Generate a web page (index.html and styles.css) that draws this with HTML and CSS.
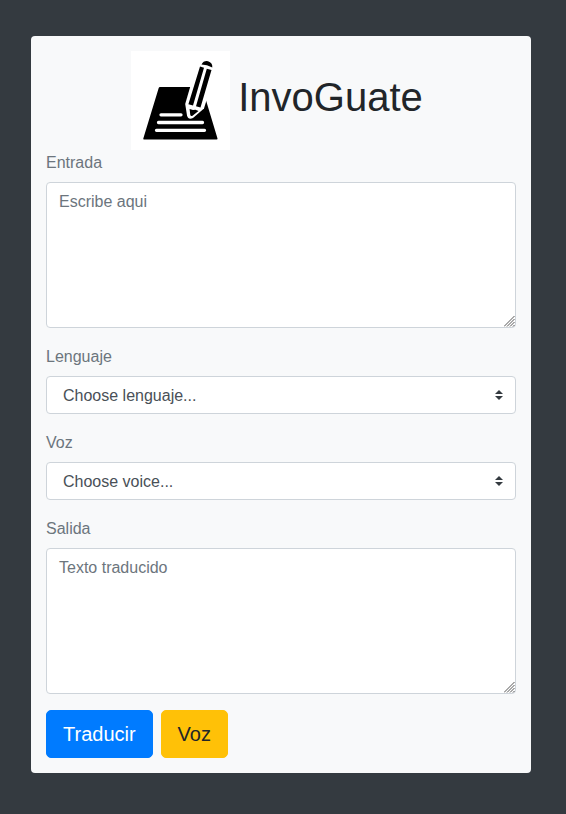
FILE: index.html
```html
<!DOCTYPE html>
<html lang="es">
<head>
<meta charset="utf-8">
<meta name="viewport" content="width=device-width, initial-scale=1">
<title>InvoGuate</title>
<link rel="stylesheet" href="styles.css">
</head>
<body>
<main class="card">
  <header class="brand">
    <svg class="brand-logo" viewBox="0 0 99 99" aria-hidden="true">
      <rect width="99" height="99" fill="#fff"/>
      <path d="M29 36H71L86.500 87.500Q86.700 88.500 85.700 88.500H13Q12 88.500 12.300 87.500L27.700 37Q28 36 29 36Z"/>
      <path d="M30 63.800H50M27.500 71.500H71.500M25.500 79.300H73.500" fill="none" stroke="#fff" stroke-width="3.300" stroke-linecap="round"/>
      <path d="M66 12.500L54.200 53L56 64.500Q57.500 69.500 62 67L73 57.500L85 18Z" fill="#fff"/>
      <path d="M70.500 13.500Q72.500 9.500 77 10.200Q81.700 11.500 81.300 16.500Q76 13.500 70.500 13.500Z"/>
      <path d="M69 15.500L73 16.700L62 54.500L57.400 53.200ZM75.800 17.700L80.500 19L69.500 56.500L65 55.200Z"/>
      <path d="M58.600 58L62 59L64.500 58.700L67.500 60L61.500 64.700Q59.800 65.500 59.300 64Z"/>
    </svg>
    <h1 class="brand-name">InvoGuate</h1>
  </header>
  <form>
    <div class="field">
      <label for="input">Entrada</label>
      <div class="control-wrap">
        <textarea id="input" class="control area" placeholder="Escribe aqui"></textarea>
        <svg class="grip" viewBox="0 0 11 11" aria-hidden="true"><path d="M0 10.500L10.500 0M3 10.500L10.500 3M6 10.500L10.500 6M9 10.500L10.500 9"/></svg>
      </div>
    </div>
    <div class="field">
      <label for="language">Lenguaje</label>
      <div class="control-wrap">
        <select id="language" class="control select"><option>Choose lenguaje...</option></select>
        <svg class="arrows" viewBox="0 0 4 5" aria-hidden="true"><path d="M2 0L0 2h4zm0 5L0 3h4z"/></svg>
      </div>
    </div>
    <div class="field">
      <label for="voice">Voz</label>
      <div class="control-wrap">
        <select id="voice" class="control select"><option>Choose voice...</option></select>
        <svg class="arrows" viewBox="0 0 4 5" aria-hidden="true"><path d="M2 0L0 2h4zm0 5L0 3h4z"/></svg>
      </div>
    </div>
    <div class="field">
      <label for="output">Salida</label>
      <div class="control-wrap">
        <textarea id="output" class="control area" placeholder="Texto traducido"></textarea>
        <svg class="grip" viewBox="0 0 11 11" aria-hidden="true"><path d="M0 10.500L10.500 0M3 10.500L10.500 3M6 10.500L10.500 6M9 10.500L10.500 9"/></svg>
      </div>
    </div>
    <div class="actions">
      <button type="button" class="btn btn-primary">Traducir</button>
      <button type="button" class="btn btn-warning">Voz</button>
    </div>
  </form>
</main>
</body>
</html>
```
FILE: styles.css
```css
*, *::before, *::after { box-sizing: border-box; }

body {
  margin: 0;
  padding: 36px 35px 40px 31px;
  background: #343a40;
  color: #212529;
  font: 16px/26px "Liberation Sans", Arial, sans-serif;
}

.card {
  padding: 15px;
  border-radius: 4px;
  background: #f8f9fa;
}

.brand {
  display: flex;
  align-items: center;
  justify-content: center;
  gap: 8px;
  padding-right: 8px;
}

.brand-logo {
  width: 99px;
  height: 99px;
}

.brand-name {
  margin: 0 0 8px;
  font-size: 40px;
  font-weight: 400;
  line-height: 48px;
}

.field { margin-bottom: 16px; }

.field label {
  display: block;
  margin-bottom: 6px;
  color: #6c757d;
}

.control-wrap { position: relative; }

.control {
  display: block;
  width: 100%;
  border: 1px solid #ced4da;
  border-radius: 4px;
  background: #fff;
  color: #495057;
  font: inherit;
}

.area {
  height: 146px;
  padding: 6px 12px;
  resize: vertical;
}

.area::placeholder {
  color: #6c757d;
  opacity: 1;
}

.area::-webkit-resizer { background: transparent; }

.grip {
  position: absolute;
  right: 1px;
  bottom: 1px;
  width: 11px;
  height: 11px;
  fill: none;
  stroke: #555;
  stroke-width: 1;
  pointer-events: none;
}

.select {
  height: 38px;
  padding: 2px 28px 0 16px;
  appearance: none;
}

.arrows {
  position: absolute;
  top: 14px;
  right: 13px;
  width: 8px;
  height: 10px;
  fill: #343a40;
  pointer-events: none;
}

.actions {
  display: flex;
  gap: 8px;
}

.btn {
  padding: 8px 16px;
  border: 1px solid;
  border-radius: 5px;
  font: inherit;
  font-size: 20px;
  line-height: 30px;
}

.btn-primary {
  border-color: #007bff;
  background: #007bff;
  color: #fff;
}

.btn-warning {
  border-color: #ffc107;
  background: #ffc107;
  color: #212529;
}
```
